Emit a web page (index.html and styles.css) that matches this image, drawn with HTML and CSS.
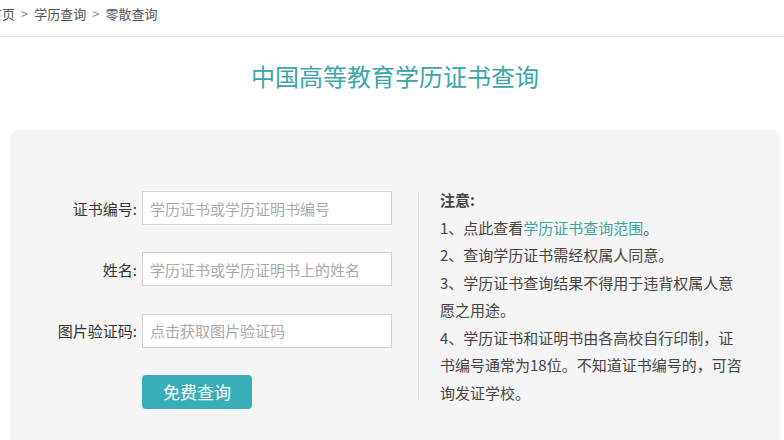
FILE: index.html
```html
<!DOCTYPE html>
<html lang="zh-CN">
<head>
  <meta charset="UTF-8">
  <title>中国高等教育学历证书查询</title>
  <link rel="stylesheet" href="styles.css">
</head>
<body>
  <!-- 面包屑 -->
  <div class="crumbs">
    <a href="#">首页</a><span class="sep">&gt;</span><a href="#">学历查询</a><span class="sep">&gt;</span><span>零散查询</span>
  </div>

  <h1 class="title">中国高等教育学历证书查询</h1>

  <div class="panel">
    <form class="query-form" onsubmit="return false">
      <div class="row">
        <label for="zsbh">证书编号:</label>
        <input type="text" id="zsbh" placeholder="学历证书或学历证明书编号">
      </div>
      <div class="row">
        <label for="xm">姓名:</label>
        <input type="text" id="xm" placeholder="学历证书或学历证明书上的姓名">
      </div>
      <div class="row">
        <label for="yzm">图片验证码:</label>
        <input type="text" id="yzm" placeholder="点击获取图片验证码">
      </div>
      <div class="row">
        <span class="label-space"></span>
        <button type="submit">免费查询</button>
      </div>
    </form>

    <div class="divider"></div>

    <div class="notes">
      <p class="notes-head">注意:</p>
      <p>1、点此查看<a href="#">学历证书查询范围</a>。</p>
      <p>2、查询学历证书需经权属人同意。</p>
      <p>3、学历证书查询结果不得用于违背权属人意愿之用途。</p>
      <p>4、学历证书和证明书由各高校自行印制，证书编号通常为18位。不知道证书编号的，可咨询发证学校。</p>
    </div>
  </div>
</body>
</html>
```

FILE: styles.css
```css
body {
  margin: 0;
  font-family: "Noto Sans CJK SC", "Liberation Sans", sans-serif;
  background: #fff;
  color: #333;
  overflow: hidden;
}

a {
  text-decoration: none;
  color: inherit;
}

.crumbs {
  height: 36px;
  line-height: 28px;
  margin-left: -11px;
  font-size: 13px;
  color: #555;
  border-bottom: 1px solid #e6e6e6;
  white-space: nowrap;
}

.crumbs .sep {
  margin: 0 6px;
  color: #888;
}

.title {
  margin: 23px 0 0;
  font-size: 24px;
  line-height: 32px;
  font-weight: normal;
  text-align: center;
  color: #3aa6a8;
  padding-left: 6px;
}

.panel {
  margin: 38px 4px 0 10px;
  height: 320px;
  background: #f5f5f5;
  border-radius: 8px;
  padding: 56px 0 0 27px;
  display: flex;
  align-items: flex-start;
  box-sizing: border-box;
}

.query-form {
  padding-top: 5px;
  display: flex;
  flex-direction: column;
  gap: 27.3px;
}

.row {
  display: flex;
  align-items: center;
  height: 34px;
}

.row label,
.label-space {
  width: 100px;
  margin-right: 5px;
  text-align: right;
  font-size: 15px;
  color: #333;
}

.row input {
  width: 250px;
  height: 34px;
  box-sizing: border-box;
  border: 1px solid #d3d3d3;
  background: #fff;
  padding: 0 7px;
  font-family: inherit;
  font-size: 15px;
  color: #333;
  outline: none;
}

.row input::placeholder {
  color: #aaa;
}

button {
  width: 110px;
  height: 34px;
  border: none;
  border-radius: 4px;
  background: #38aeb8;
  color: #fff;
  font-family: inherit;
  font-size: 17px;
  cursor: pointer;
}

button:hover {
  background: #2f9ea7;
}

.divider {
  width: 1px;
  height: 208px;
  margin: 6px 21px 0 26px;
  background: #dcdcdc;
}

.notes {
  width: 306px;
  font-size: 15px;
  line-height: 27.5px;
  color: #444;
}

.notes p {
  margin: 0;
}

.notes-head {
  font-weight: bold;
}

.notes a {
  color: #3aa6a8;
}
```
